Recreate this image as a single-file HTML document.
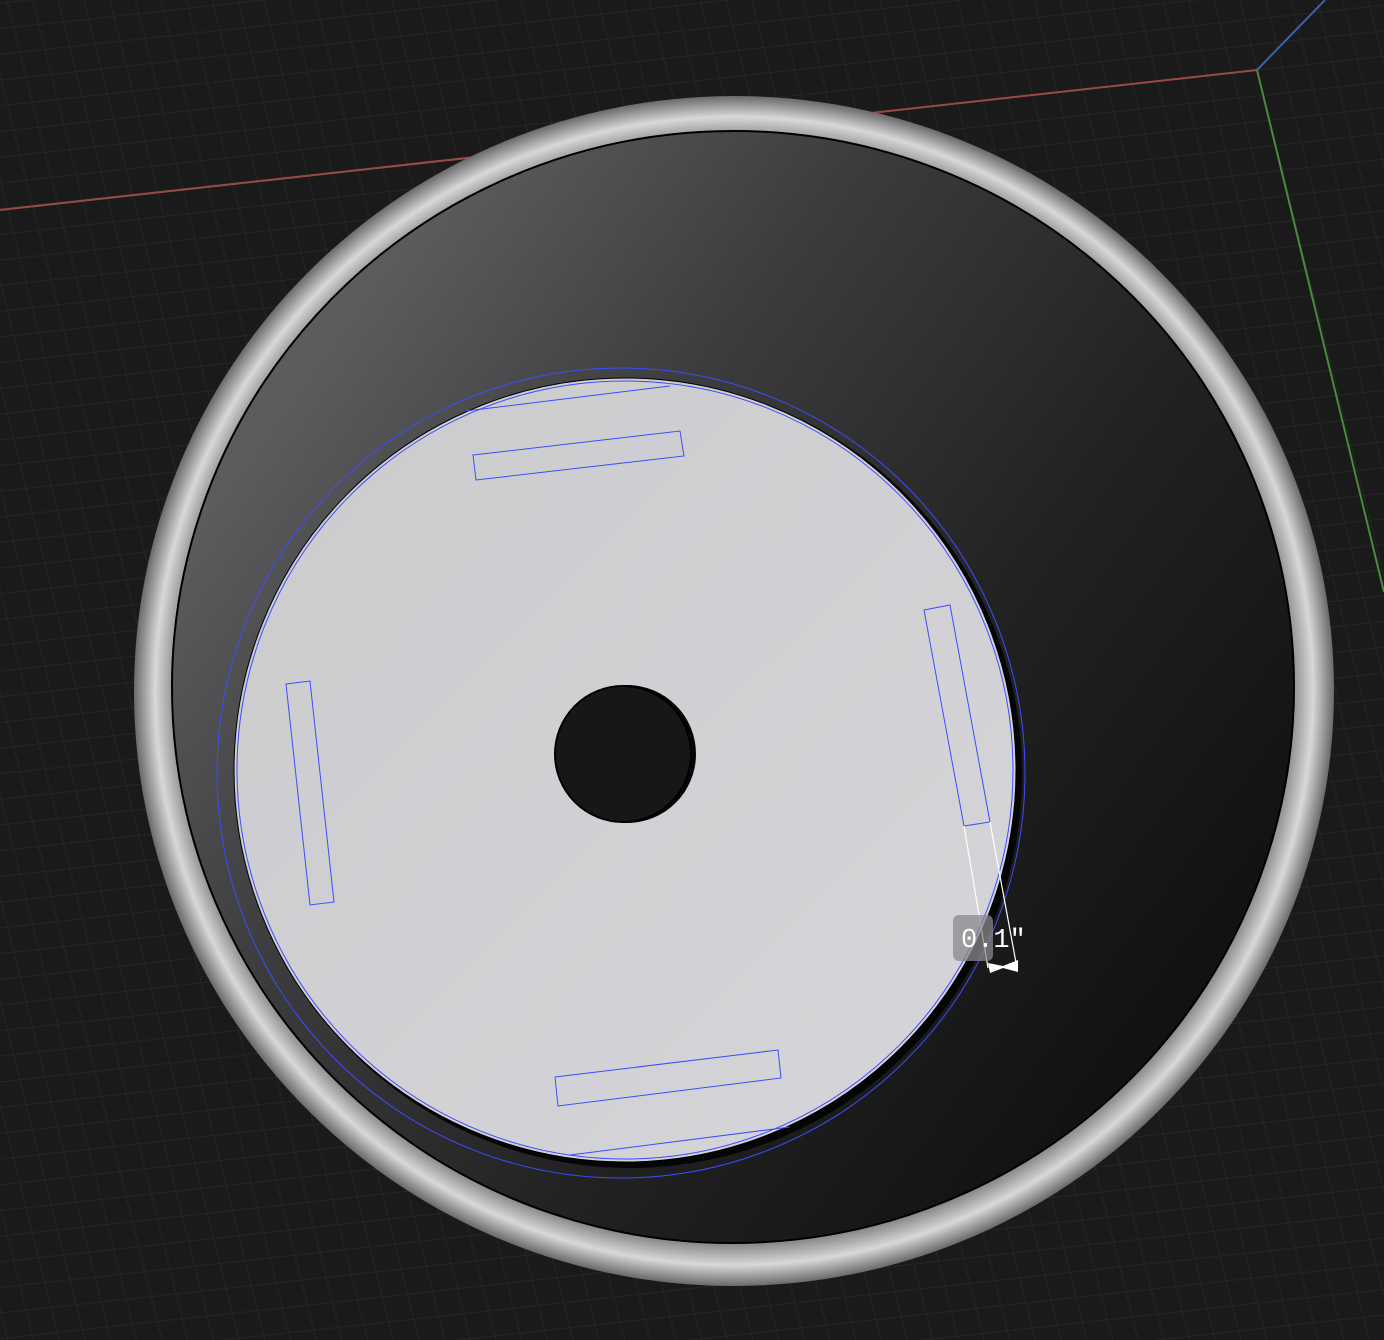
<!DOCTYPE html>
<html><head><meta charset="utf-8"><style>
html,body{margin:0;padding:0;background:#1a1a1b;width:1384px;height:1340px;overflow:hidden}
svg{display:block}
</style></head><body>
<svg width="1384" height="1340" viewBox="0 0 1384 1340" xmlns="http://www.w3.org/2000/svg">
<defs>
<pattern id="g" width="25" height="25" patternUnits="userSpaceOnUse" patternTransform="matrix(1,-0.11,0.25,1,1257,70)">
<path d="M0 0H25M0 0V25" stroke="#2b2b2c" stroke-width="1.2" fill="none"/>
</pattern>
<radialGradient id="rim" cx="0.5" cy="0.5" r="0.5">
<stop offset="0.93" stop-color="#8a8a8c"/>
<stop offset="0.965" stop-color="#d8d8da"/>
<stop offset="1" stop-color="#6a6a6c"/>
</radialGradient>
<linearGradient id="bowl" x1="0.05" y1="0.3" x2="0.8" y2="0.9">
<stop offset="0" stop-color="#5c5c5e"/>
<stop offset="0.3" stop-color="#3c3c3e"/>
<stop offset="0.65" stop-color="#222223"/>
<stop offset="1" stop-color="#121212"/>
</linearGradient>
<linearGradient id="disc" x1="0" y1="0" x2="1" y2="1">
<stop offset="0" stop-color="#cbcbce"/>
<stop offset="1" stop-color="#d6d6da"/>
</linearGradient>
</defs>
<rect width="1384" height="1340" fill="#1a1a1b"/>
<rect width="1384" height="1340" fill="url(#g)"/>
<line x1="0" y1="210" x2="1257" y2="70" stroke="#9a4a42" stroke-width="2"/>
<line x1="1257" y1="70" x2="1384" y2="592" stroke="#4a8a3e" stroke-width="2"/>
<line x1="1257" y1="70" x2="1325" y2="0" stroke="#3a62a8" stroke-width="2"/>
<ellipse cx="734" cy="691" rx="600" ry="595" fill="url(#rim)" transform="rotate(-3 734 691)"/>
<ellipse cx="733" cy="687" rx="561" ry="556" fill="url(#bowl)" stroke="#000" stroke-width="2" transform="rotate(-3 733 687)"/>
<ellipse cx="630" cy="774" rx="392" ry="394" fill="#050505"/>
<ellipse cx="625" cy="770" rx="391" ry="392" fill="url(#disc)" stroke="#000" stroke-width="1"/>
<ellipse cx="621" cy="773" rx="404" ry="405" fill="none" stroke="#3b4dff" stroke-width="1"/>
<ellipse cx="625" cy="770" rx="388" ry="389" fill="none" stroke="#3b4dff" stroke-width="1"/>
<circle cx="627" cy="754" r="69" fill="#050505"/>
<circle cx="623" cy="754" r="68" fill="#171717" stroke="#000" stroke-width="2"/>
<g fill="none" stroke="#3b4dff" stroke-width="1">
<polygon points="473,455 680,431 684,456 476,480"/>
<polygon points="924,610 950,605 990,822 964,826"/>
<polygon points="286,684 310,681 334,902 310,905"/>
<polygon points="555,1077 778,1050 781,1078 558,1106"/>
<line x1="466" y1="411" x2="670" y2="386"/>
<line x1="570" y1="1155" x2="790" y2="1127"/>
</g>
<line x1="964" y1="826" x2="988" y2="968" stroke="#fff" stroke-width="1.2"/>
<line x1="990" y1="822" x2="1017" y2="968" stroke="#fff" stroke-width="1.2"/>
<rect x="953" y="915" width="40" height="46" rx="6" fill="#8a8a8c" opacity="0.75"/>
<text x="961" y="947" font-family="Liberation Mono, DejaVu Sans Mono, monospace" font-size="27" fill="#fff">0.1"</text>
<path d="M988 963 L1003 966 L1018 960 L1018 972 L1003 968 L990 973 Z" fill="#fff"/>
</svg>
</body></html>
